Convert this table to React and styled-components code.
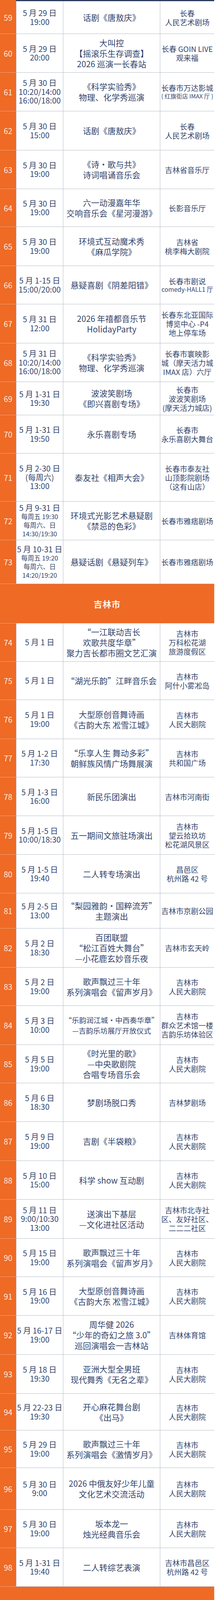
import React from "react";
import styled, { createGlobalStyle } from "styled-components";

const ORANGE = "#ee6a25";
const INK = "#34456d";
const GRID = "#b6bdc8";

const GlobalStyle = createGlobalStyle`
  html, body {
    margin: 0;
    padding: 0;
    background: #ffffff;
  }
  body {
    font-family: "Noto Sans CJK SC", "Noto Sans", sans-serif;
    color: ${INK};
  }
`;

const Table = styled.div`
  width: 548px;
  display: flex;
  flex-direction: column;
`;

const TopRule = styled.div`
  display: grid;
  grid-template-columns: 41px 1fr;
  height: 3px;

  &::before {
    content: "";
    background: ${ORANGE};
  }
  &::after {
    content: "";
    background: #2d3a5c;
  }
`;

const Row = styled.div`
  display: grid;
  grid-template-columns: 41px 120px 248px 139px;
  height: ${(p) => p.$h}px;
`;

const Num = styled.div`
  background: ${ORANGE};
  color: #fdebdc;
  font-size: 20px;
  display: flex;
  align-items: center;
  justify-content: center;
  border-bottom: 1px solid #f2a27c;
`;

const Cell = styled.div`
  display: flex;
  flex-direction: column;
  align-items: center;
  justify-content: center;
  text-align: center;
  border-bottom: 1px solid ${GRID};
  border-left: 1px solid ${GRID};
  min-width: 0;
`;

const Line = styled.span`
  display: block;
  white-space: nowrap;
  font-size: ${(p) => p.$size}px;
  line-height: ${(p) => p.$lh}px;
`;

const Section = styled.div`
  height: ${(p) => p.$h}px;
  background: ${ORANGE};
  color: #fff4ea;
  font-size: 22px;
  font-weight: 700;
  letter-spacing: 1px;
  display: flex;
  align-items: center;
  justify-content: center;
  border-bottom: 1px solid #f2a27c;
`;

// n 序号, h 行高, d 日期, t 名称, v 地点; tf/vf/ds 字号调整
const data = [
  { n: 59, h: 84, d: "5 月 29 日|19:00", t: "话剧《唐敖庆》", v: "长春|人民艺术剧场" },
  { n: 60, h: 99, d: "5 月 29 日|20:00", t: "大叫控|【摇滚乐生存调查】|2026 巡演一长春站", v: "长春 GOIN LIVE|观来福" },
  { n: 61, h: 99, d: "5 月 30 日|10:20/14:00|16:00/18:00", t: "《科学实验秀》|物理、化学秀巡演", v: "长春市万达影城|( 红旗街店 IMAX 厅 )", vf: [19, 15] },
  { n: 62, h: 100, d: "5 月 30 日|15:00", t: "话剧《唐敖庆》", v: "长春|人民艺术剧场" },
  { n: 63, h: 99, d: "5 月 30 日|19:00", t: "《诗·歌与共》|诗词唱诵音乐会", v: "吉林省音乐厅" },
  { n: 64, h: 97, d: "5 月 30 日|19:00", t: "六一动漫嘉年华|交响音乐会《星河漫游》", v: "长影音乐厅" },
  { n: 65, h: 100, d: "5 月 30 日|19:00", t: "环境式互动魔术秀|《麻瓜学院》", v: "吉林省|桃李梅大剧院" },
  { n: 66, h: 98, d: "5 月 1-15 日|15:00/20:00", t: "悬疑喜剧《阴差阳错》", v: "长春市剧说|comedy-HALL1 厅", vf: [19, 16] },
  { n: 67, h: 100, d: "5 月 31 日|12:00", t: "2026 年禧都音乐节|HolidayParty", v: "长春东北亚国际|博览中心 -P4|地上停车场" },
  { n: 68, h: 99, d: "5 月 31 日|10:20/14:00|16:00/18:00", t: "《科学实验秀》|物理、化学秀巡演", v: "长春市寰映影|城（摩天活力城|IMAX 店）六厅" },
  { n: 69, h: 85, d: "5 月 1-31 日|19:30", t: "波波笑剧场|《即兴喜剧专场》", v: "长春市|波波笑剧场|(摩天活力城店)" },
  { n: 70, h: 98, d: "5 月 1-31 日|19:50", t: "永乐喜剧专场", v: "长春市|永乐喜剧大舞台" },
  { n: 71, h: 123, d: "5 月 2-30 日|(每周六)|13:00", t: "泰友社《相声大会》", v: "长春市泰友社|山顶影院剧场|（这有山店）" },
  { n: 72, h: 99, d: "5 月 9-31 日|每周五 19:30|每周六、日|14:30/19:30", ds: 16.5, t: "环境式光影艺术悬疑剧|《禁忌的色彩》", v: "长春市雅痞剧场" },
  { n: 73, h: 112, d: "5 月 10-31 日|每周五 19:20|每周六、日|14:20/19:20", ds: 16.5, t: "悬疑话剧《悬疑列车》", v: "长春市雅痞剧场" },
  { s: "吉林市", h: 100 },
  { n: 74, h: 98, d: "5 月 1 日", t: "“一江联动吉长|欢歌共度华章”|聚力吉长都市圈文艺汇演", v: "吉林市|万科松花湖|旅游度假区" },
  { n: 75, h: 98, d: "5 月 1 日", t: "“湖光乐韵”江畔音乐会", v: "吉林市|阿什小雾凇岛" },
  { n: 76, h: 100, d: "5 月 1 日|19:00", t: "大型原创音舞诗画|《古韵大东 凇雪江城》", v: "吉林市|人民大剧院" },
  { n: 77, h: 98, d: "5 月 1-2 日|17:30", t: "“乐享人生 舞动多彩”|朝鲜族风情广场舞展演", v: "吉林市|共和国广场" },
  { n: 78, h: 99, d: "5 月 1-3 日|16:00", t: "新民乐团演出", v: "吉林市河南街" },
  { n: 79, h: 99, d: "5 月 1-5 日|10:00/18:30", t: "五一期间文旅驻场演出", v: "吉林市|望云拾玖坊|松花湖风景区" },
  { n: 80, h: 99, d: "5 月 1-5 日|19:40", t: "二人转专场演出", v: "昌邑区|杭州路 42 号" },
  { n: 81, h: 90, d: "5 月 2-5 日|13:00", t: "“梨园雅韵·国粹流芳”|主题演出", v: "吉林市京剧公园" },
  { n: 82, h: 100, d: "5 月 2 日|18:30", t: "百团联盟|“松江百姓大舞台”|—小花鹿玄妙音乐夜", v: "吉林市玄天岭" },
  { n: 83, h: 98, d: "5 月 2 日|19:00", t: "歌声飘过三十年|系列演唱会《留声岁月》", v: "吉林市|人民大剧院" },
  { n: 84, h: 100, d: "5 月 3 日|10:00", t: "“乐韵润江城·中西奏华章”|—吉韵乐坊展厅开放仪式", tf: 18.5, v: "吉林市|群众艺术馆一楼|吉韵乐坊体验区" },
  { n: 85, h: 98, d: "5 月 5 日|19:00", t: "《时光里的歌》|—中央歌剧院|合唱专场音乐会", v: "吉林市|人民大剧院" },
  { n: 86, h: 99, d: "5 月 6 日|18:30", t: "梦剧场脱口秀", v: "吉林梦剧场" },
  { n: 87, h: 100, d: "5 月 9 日|19:00", t: "吉剧《半袋粮》", v: "吉林市|人民大剧院" },
  { n: 88, h: 99, d: "5 月 10 日|15:00", t: "科学 show 互动剧", v: "吉林市|人民大剧院" },
  { n: 89, h: 100, d: "5 月 11 日|9:00/10:30|13:00", t: "送演出下基层|—文化进社区活动", v: "吉林市北寺社|区、友好社区、|二二二社区" },
  { n: 90, h: 98, d: "5 月 15 日|19:00", t: "歌声飘过三十年|系列演唱会《留声岁月》", v: "吉林市|人民大剧院" },
  { n: 91, h: 99, d: "5 月 16 日|19:00", t: "大型原创音舞诗画|《古韵大东 凇雪江城》", v: "吉林市|人民大剧院" },
  { n: 92, h: 100, d: "5 月 16-17 日|19:00", t: "周华健 2026|“少年的奇幻之旅 3.0”|巡回演唱会一吉林站", v: "吉林体育馆" },
  { n: 93, h: 100, d: "5 月 18 日|19:30", t: "亚洲大型全男班|现代舞秀《无名之辈》", v: "吉林市|人民大剧院" },
  { n: 94, h: 94, d: "5 月 22-23 日|19:30", t: "开心麻花舞台剧|《出马》", v: "吉林市|人民大剧院" },
  { n: 95, h: 96, d: "5 月 29 日|19:00", t: "歌声飘过三十年|系列演唱会《激情岁月》", v: "吉林市|人民大剧院" },
  { n: 96, h: 107, d: "5 月 30 日|9:00", t: "2026 中俄友好少年儿童|文化艺术交流活动", v: "吉林市|人民大剧院" },
  { n: 97, h: 98, d: "5 月 30 日|19:00", t: "坂本龙一|烛光经典音乐会", v: "吉林市|人民大剧院" },
  { n: 98, h: 99, d: "5 月 1-31 日|19:40", t: "二人转综艺表演", v: "吉林市昌邑区|杭州路 42 号" },
  { s: "四平市", h: 100 },
  { n: 99, h: 100, d: "5 月 1 日|8:00", t: "“庆五·一”文艺汇演", v: "梨树县化石山村|文化大院" },
  { n: 100, h: 99, d: "5 月 1 日|9:00", t: "“我们的节日”|五一劳动节文艺慰问演出", v: "铁西区地直社区" },
  { n: 101, h: 100, d: "5 月 1-3 日|9:30", t: "“庆五·一”文艺演出", v: "伊通满族自治县|八旗广场" },
  { n: 102, h: 98, d: "5 月 1 日|17:00", t: "“庆五·一”乐队演出", v: "伊通满族自治县|八旗广场" },
  { n: 103, h: 100, d: "5 月 3 日|17:00", t: "二人转专场演出", v: "伊通满族自治县|八旗广场" },
  { n: 104, h: 100, d: "5 月 6 日|8:00", t: "十家堡镇“梨花节”|大秧歌展演", v: "梨树县十家堡镇|铁岭窝堡村" },
  { n: 105, h: 98, d: "5 月 1-9 日|9:00", t: "“送演出下基层”|文化惠民演出", v: "四平市梨树县" },
  { n: 106, h: 97, d: "5 月 12 日|9:00", t: "“五月欢歌”|文化惠民演出", v: "梨树县|马地方文化广场" },
  { n: 107, h: 99, d: "5 月中旬|9:30", t: "“送演出下基层”|文化惠民演出", v: "四平周边|各社区、村屯" },
  { n: 108, h: 111, d: "5 月 28 日|8:30", t: "喇嘛甸镇 2026 年举办|“五月欢歌·秧舞乡村”|大秧歌、广场舞展演", tf: 20, v: "梨树县喇嘛甸镇|文广站活动广场" },
  { n: 109, h: 99, d: "5 月 29 日|8:00", t: "2026 十家堡镇|“惠民暖人心·欢歌进万家”|春季村晚", tf: 18.5, v: "梨树县十家堡镇|街道" },
  { n: 110, h: 100, d: "5 月 30 日|9:30", t: "四平市第二十四届|庆六一少儿书画表演|展示活动", v: "四平市群众艺术馆|(四平市朝鲜族艺术馆)", vf: 14 },
  { s: "辽源市", h: 97 },
  { n: 111, h: 100, d: "5 月 1-3 日|10:00", t: "快闪演出", v: "辽源市欢乐荟、|辽源市黑金小镇、|辽源市动植物园", vf: 16.5 },
  { n: 112, h: 99, d: "5 月 1 日|18:00", t: "电声乐队演出", v: "辽源市欢乐荟" },
  { s: "通化市", h: 98 },
  { n: 113, h: 99, d: "5 月 1-4 日|10:30", t: "文化表演及互动活动", v: "集安市滨江广场" },
  { n: 114, h: 99, d: "5 月 1-4 日|11:30", t: "朝鲜族文化|表演及互动活动", v: "集安市|火盆一条街" },
  { n: 115, h: 99, d: "5 月 1-4 日|15:00", t: "高句丽沉浸式表演", v: "集安市|江边亲水平台" },
  { n: 116, h: 99, d: "5 月 1-4 日|18:00", t: "“跨过山海·爱在集安”|文艺演出", v: "集安市|大吉他主题广场" },
  { n: 117, h: 99, d: "5 月 1-4 日|19:00", t: "古城夜游系列演出", v: "集安市彩虹桥、|文化长廊、大吉|他广场等", vf: 18.5 },
  { n: 118, h: 99, d: "5 月 1-4 日|19:30", t: "高句丽沉浸式表演|《婿屋招亲》", v: "集安市|大吉他主题广场" },
  { n: 119, h: 100, d: "5 月 5 日|18:00", t: "“跨过山海·爱在集安”|文艺演出", v: "集安市|大吉他主题广场" },
];

const sizeAt = (size, i) => (Array.isArray(size) ? size[i] : size);

const Lines = ({ text, size, lh }) =>
  text.split("|").map((line, i) => (
    <Line key={i} $size={sizeAt(size, i)} $lh={lh}>
      {line}
    </Line>
  ));

const EventRow = ({ item }) => {
  const dateSizes = item.ds
    ? item.d.split("|").map((_, i) => (i === 0 ? 20 : item.ds))
    : 20;
  return (
    <Row $h={item.h}>
      <Num>{item.n}</Num>
      <Cell>
        <Lines text={item.d} size={dateSizes} lh={item.ds ? 22 : 22.5} />
      </Cell>
      <Cell>
        <Lines text={item.t} size={item.tf || 21} lh={27} />
      </Cell>
      <Cell>
        <Lines text={item.v} size={item.vf || 19} lh={item.vf ? 21 : 23} />
      </Cell>
    </Row>
  );
};

const App = () => (
  <>
    <GlobalStyle />
    <Table>
      <TopRule />
      {data.map((item, i) =>
        item.s ? (
          <Section key={i} $h={item.h}>
            {item.s}
          </Section>
        ) : (
          <EventRow key={i} item={item} />
        )
      )}
    </Table>
  </>
);

export default App;
